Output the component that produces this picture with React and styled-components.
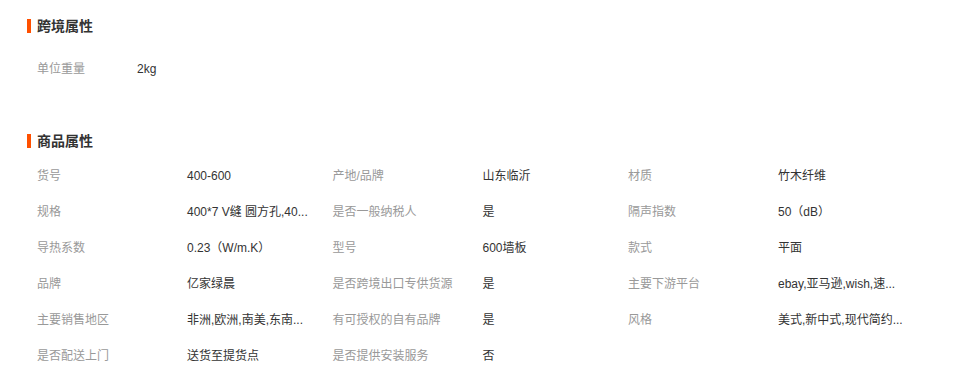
import React from "react";
import styled, { createGlobalStyle } from "styled-components";

const GlobalStyle = createGlobalStyle`
  body {
    margin: 0;
    background: #fff;
    font-family: "Liberation Sans", "Noto Sans CJK SC", sans-serif;
  }
`;

const Page = styled.div`
  padding: 18px 0 0 27px;
  width: 958px;
  box-sizing: border-box;
`;

const Section = styled.section`
  margin-bottom: ${(p) => p.gap || 0}px;
`;

const Title = styled.h3`
  display: flex;
  align-items: center;
  gap: 6px;
  margin: 0;
  height: 16px;
  font-size: 14px;
  font-weight: bold;
  color: #333;
  line-height: 16px;

  &::before {
    content: "";
    width: 4px;
    height: 14px;
    background: #ff5000;
  }
`;

const Grid = styled.div`
  display: grid;
  grid-template-columns: ${(p) => p.cols};
  grid-auto-rows: 36px;
  margin-top: ${(p) => p.top}px;
  padding-left: 10px;
`;

const Label = styled.div`
  font-size: 12px;
  color: #999;
  line-height: 36px;
  white-space: nowrap;
`;

const Value = styled.div`
  font-size: 12px;
  color: #333;
  line-height: 36px;
  white-space: nowrap;
`;

const crossBorder = [["单位重量", "2kg"]];

// values shown as the page shows them, already shortened
const product = [
  ["货号", "400-600"],
  ["产地/品牌", "山东临沂"],
  ["材质", "竹木纤维"],
  ["规格", "400*7 V缝 圆方孔,40..."],
  ["是否一般纳税人", "是"],
  ["隔声指数", "50（dB）"],
  ["导热系数", "0.23（W/m.K）"],
  ["型号", "600墙板"],
  ["款式", "平面"],
  ["品牌", "亿家绿晨"],
  ["是否跨境出口专供货源", "是"],
  ["主要下游平台", "ebay,亚马逊,wish,速..."],
  ["主要销售地区", "非洲,欧洲,南美,东南..."],
  ["有可授权的自有品牌", "是"],
  ["风格", "美式,新中式,现代简约..."],
  ["是否配送上门", "送货至提货点"],
  ["是否提供安装服务", "否"],
];

const Pairs = ({ items }) =>
  items.map(([k, v]) => (
    <React.Fragment key={k}>
      <Label>{k}</Label>
      <Value>{v}</Value>
    </React.Fragment>
  ));

export default function App() {
  return (
    <>
      <GlobalStyle />
      <Page>
        <Section gap={46}>
          <Title>跨境属性</Title>
          <Grid cols="100px 200px" top={17}>
            <Pairs items={crossBorder} />
          </Grid>
        </Section>
        <Section>
          <Title>商品属性</Title>
          <Grid cols="repeat(3, 150px 145.5px)" top={9}>
            <Pairs items={product} />
          </Grid>
        </Section>
      </Page>
    </>
  );
}
